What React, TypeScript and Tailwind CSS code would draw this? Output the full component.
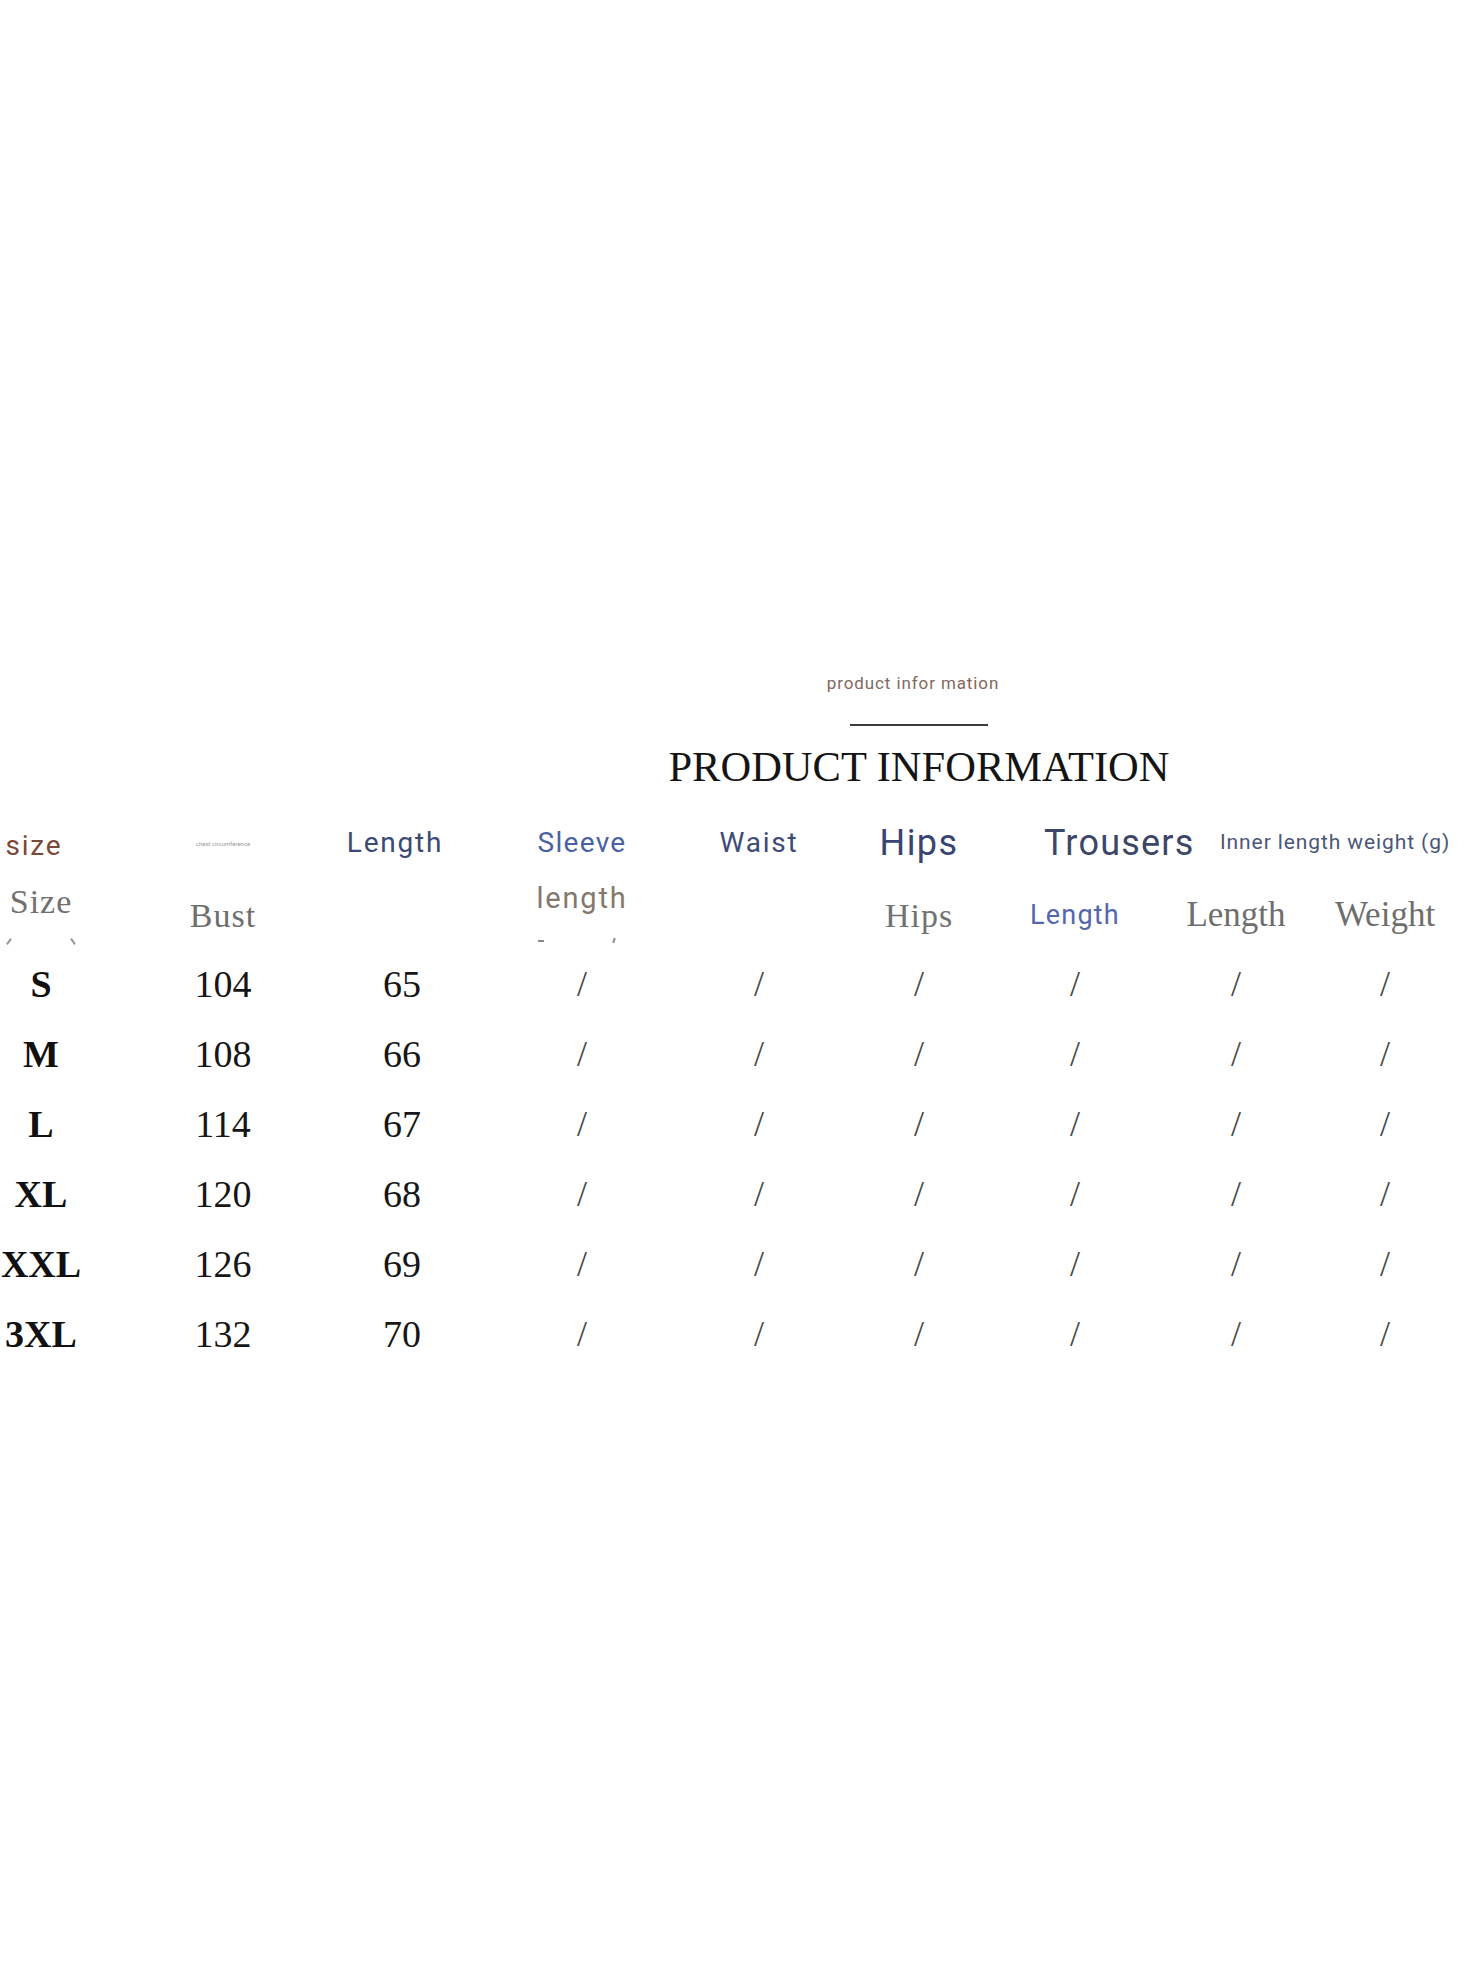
import React from "react";

const serif = "font-['Liberation_Serif','Times_New_Roman',serif]";
const sans = "font-['Roboto','Liberation_Sans',Arial,sans-serif]";

const cols = "grid grid-cols-[82px_282px_76px_284px_70px_250px_62px_260px_38px]";
const cell = "flex items-center justify-center whitespace-nowrap";

const rows = [
  { s: "S", b: "104", l: "65" },
  { s: "M", b: "108", l: "66" },
  { s: "L", b: "114", l: "67" },
  { s: "XL", b: "120", l: "68" },
  { s: "XXL", b: "126", l: "69" },
  { s: "3XL", b: "132", l: "70" },
];

export default function App() {
  return (
    <div className="w-[1482px] h-[1966px] bg-white overflow-hidden">
      <div className="pt-[673px]">
        {/* title block */}
        <div className="ml-[619px] w-[600px] flex flex-col items-center">
          <div className={`${sans} text-[17px] leading-[20px] tracking-[0.9px] text-[#84675c] -ml-[12px]`}>
            product infor mation
          </div>
          <div className="mt-[31px] w-[138px] h-[2px] bg-[#3d3d3d]" />
          <div className={`${serif} mt-[17px] text-[42.5px] leading-[48px] text-[#141414]`}>
            PRODUCT INFORMATION
          </div>
        </div>

        {/* header row 1 */}
        <div className={`${cols} mt-[25px] h-[50px]`}>
          <div className={`${cell} ${sans} text-[28px] tracking-[1.8px] text-[#7a4838] pt-[6px] -ml-[14px]`}>size</div>
          <div className={`${cell} ${sans} text-[6px] text-[#9a9a9a]`}>chest circumference</div>
          <div className={`${cell} ${sans} text-[28px] tracking-[1.8px] text-[#3c4a72] -ml-[14px]`}>Length</div>
          <div className={`${cell} ${sans} text-[28px] tracking-[1.3px] text-[#4a62a2]`}>Sleeve</div>
          <div className={`${cell} ${sans} text-[28px] tracking-[1.8px] text-[#3e4a7a]`}>Waist</div>
          <div className={`${cell} ${sans} text-[36px] tracking-[1.4px] text-[#3a4472]`}>Hips</div>
          <div className={`flex items-center justify-start whitespace-nowrap ${sans} text-[36px] tracking-[1.2px] text-[#3c4668]`}>Trousers</div>
          <div className={`col-span-2 flex items-center justify-start whitespace-nowrap pl-[114px] ${sans} text-[21px] tracking-[0.9px] text-[#4b5676]`}>
            Inner length weight (g)
          </div>
        </div>

        {/* header row 2 */}
        <div className={`${cols} h-[83px]`}>
          <div className={`${cell} relative ${serif} text-[34px] tracking-[1px] text-[#707070] pb-[12px]`}>
            Size
            <span className="absolute left-[8px] bottom-[4px] w-[2px] h-[7px] bg-[#9a9a9a] rotate-[35deg]" />
            <span className="absolute left-[72px] bottom-[4px] w-[2px] h-[7px] bg-[#9a9a9a] -rotate-[35deg]" />
          </div>
          <div className={`${cell} ${serif} text-[34px] tracking-[1px] text-[#6e6e6e] pt-[15px]`}>Bust</div>
          <div className={cell} />
          <div className={`${cell} relative ${sans} text-[29px] tracking-[1.8px] text-[#84786e] pb-[18px]`}>
            length
            <span className="absolute left-[98px] bottom-[7px] w-[6px] h-[2px] bg-[#8a8a8a]" />
            <span className="absolute left-[173px] bottom-[6px] w-[2px] h-[5px] bg-[#8a8a8a] rotate-[20deg]" />
          </div>
          <div className={cell} />
          <div className={`${cell} ${serif} text-[34px] tracking-[1px] text-[#727272] pt-[15px]`}>Hips</div>
          <div className={`${cell} ${sans} text-[27px] tracking-[1.2px] text-[#5468a8] pt-[15px]`}>Length</div>
          <div className={`${cell} ${serif} text-[35px] text-[#6e6e6e] pt-[15px]`}>Length</div>
          <div className={`${cell} ${serif} text-[35px] text-[#6e6e6e] pt-[15px]`}>Weight</div>
        </div>

        {/* data rows */}
        {rows.map((r) => (
          <div key={r.s} className={`${cols} h-[70px]`}>
            <div className={`${cell} ${serif} font-bold text-[38px] leading-none text-[#111]`}>{r.s}</div>
            <div className={`${cell} ${serif} text-[38px] leading-none text-[#161616]`}>{r.b}</div>
            <div className={`${cell} ${serif} text-[38px] leading-none text-[#161616]`}>{r.l}</div>
            {[0, 1, 2, 3, 4, 5].map((i) => (
              <div key={i} className={`${cell} ${serif} text-[36px] leading-none text-[#4a4a4a]`}>/</div>
            ))}
          </div>
        ))}
      </div>
    </div>
  );
}
